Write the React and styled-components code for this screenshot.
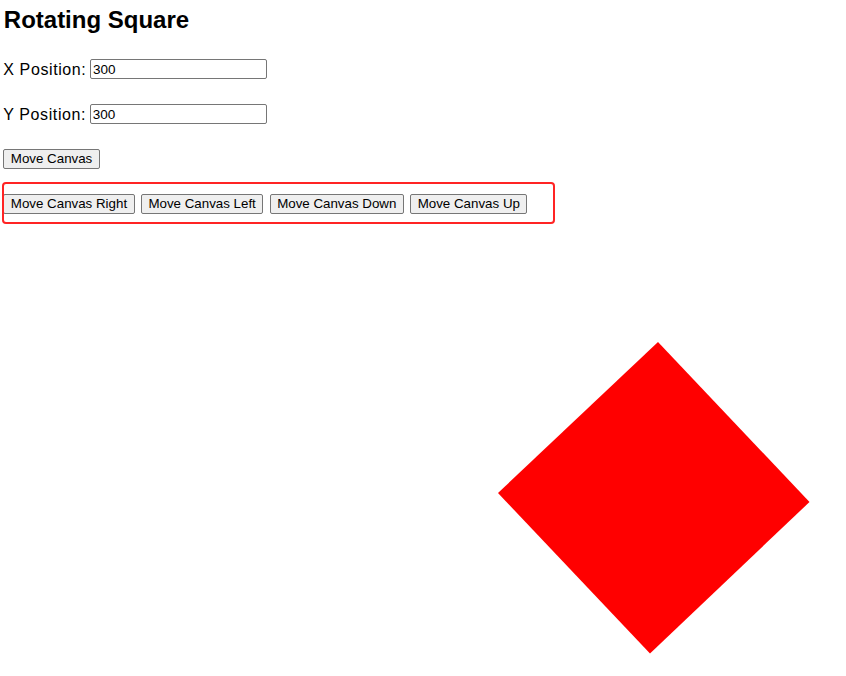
import styled, { createGlobalStyle } from "styled-components";

const GlobalStyle = createGlobalStyle`
  html, body {
    margin: 0;
    padding: 0;
    background: #ffffff;
  }
  body {
    font-family: "Liberation Sans", Arial, sans-serif;
    color: #000000;
    overflow: hidden;
  }
`;

const Page = styled.div`
  width: 846px;
  height: 676px;
  display: flex;
  flex-direction: column;
`;

const Controls = styled.div`
  display: flex;
  flex-direction: column;
  gap: 25px;
  padding: 6px 0 0 3.3px;
`;

const Title = styled.h2`
  margin: 0;
  font-size: 24px;
  line-height: 28px;
  font-weight: bold;
  padding-left: 0.5px;
`;

const Row = styled.div`
  position: relative;
  display: flex;
  align-items: center;
  height: 20px;
  gap: ${({ gap }) => gap || 0}px;
`;

const Label = styled.label`
  font-size: 16px;
  letter-spacing: 0.6px;
  line-height: 18px;
  margin-right: 3.6px;
  padding-top: 2px;
`;

const NumberInput = styled.input`
  box-sizing: border-box;
  width: 177px;
  height: 20px;
  margin: 0;
  padding: 1px 2px;
  border: 1px solid #767676;
  border-radius: 2px;
  font-family: "Liberation Sans", Arial, sans-serif;
  font-size: 13.5px;
  color: #000;
  background: #fff;
  outline: none;
`;

const Button = styled.button`
  box-sizing: border-box;
  height: 20px;
  margin: 0;
  padding: 1px 6.5px;
  border: 1px solid #767676;
  border-radius: 2px;
  background: #efefef;
  color: #000;
  font-family: "Liberation Sans", Arial, sans-serif;
  font-size: 13.33px;
  line-height: 16px;
  white-space: nowrap;
  cursor: default;
`;

const Highlight = styled.div`
  position: absolute;
  left: -1.5px;
  top: -12.5px;
  width: 553px;
  height: 42px;
  box-sizing: border-box;
  border: 2.5px solid #ff2424;
  border-radius: 4px;
  pointer-events: none;
`;

const Stage = styled.svg`
  display: block;
  flex: 1;
  width: 846px;
`;

const STAGE_TOP = 214;
const corners = [
  [658, 342],
  [809.5, 502],
  [650, 653.5],
  [498, 493],
];

export default function App() {
  const points = corners.map(([x, y]) => `${x},${y - STAGE_TOP}`).join(" ");

  return (
    <>
      <GlobalStyle />
      <Page>
        <Controls>
          <Title>Rotating Square</Title>
          <Row>
            <Label>X Position:</Label>
            <NumberInput defaultValue="300" />
          </Row>
          <Row>
            <Label>Y Position:</Label>
            <NumberInput defaultValue="300" />
          </Row>
          <Row>
            <Button>Move Canvas</Button>
          </Row>
          <Row gap={6.3}>
            <Highlight />
            <Button>Move Canvas Right</Button>
            <Button>Move Canvas Left</Button>
            <Button>Move Canvas Down</Button>
            <Button>Move Canvas Up</Button>
          </Row>
        </Controls>
        <Stage viewBox={`0 0 846 ${676 - STAGE_TOP}`}>
          <polygon points={points} fill="#ff0000" />
        </Stage>
      </Page>
    </>
  );
}
